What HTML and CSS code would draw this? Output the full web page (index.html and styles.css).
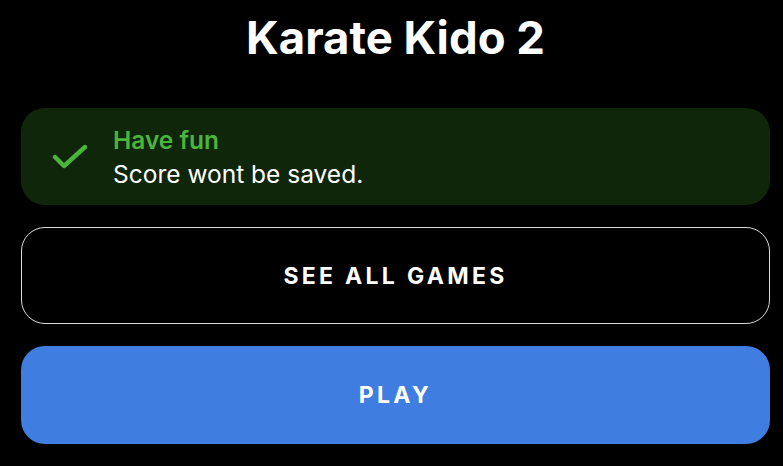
FILE: index.html
```html
<!DOCTYPE html>
<html lang="en">
<head>
<meta charset="utf-8">
<title>Karate Kido 2</title>
<link rel="stylesheet" href="styles.css">
</head>
<body>
<main class="page">
  <h1 class="title">Karate Kido 2</h1>
  <div class="notice">
    <svg class="check" width="36" height="28" viewBox="0 0 36 28" aria-hidden="true">
      <path d="M3 14 L12 23 L33 4" fill="none" stroke="#4cb33b" stroke-width="4.4" stroke-linecap="round" stroke-linejoin="round"/>
    </svg>
    <div class="notice-text">
      <div class="notice-title">Have fun</div>
      <div class="notice-body">Score wont be saved.</div>
    </div>
  </div>
  <button class="btn btn-outline">SEE ALL GAMES</button>
  <button class="btn btn-primary">PLAY</button>
</main>
</body>
</html>
```
FILE: styles.css
```css
html, body {
  margin: 0;
  padding: 0;
  background: #000;
  color: #fff;
  font-family: Inter, "Noto Sans", sans-serif;
}
.page {
  padding: 0 13px 0 21px;
  display: flex;
  flex-direction: column;
}
.title {
  margin: 0;
  height: 108px;
  box-sizing: border-box;
  padding-top: 10px;
  text-align: center;
  font-size: 45.5px;
  font-weight: 700;
  line-height: 56px;
}
.notice {
  height: 97px;
  box-sizing: border-box;
  background: #10260a;
  border-radius: 24px;
  display: flex;
  align-items: center;
  padding-left: 31px;
  gap: 25px;
}
.check {
  flex: none;
}
.notice-text {
  display: flex;
  flex-direction: column;
  font-size: 24.5px;
  line-height: 34px;
}
.notice-title {
  color: #4cb33b;
  font-weight: 600;
}
.notice-body {
  color: #fff;
}
.btn {
  height: 97px;
  margin-top: 22px;
  border-radius: 24px;
  font-family: Inter, "Noto Sans", sans-serif;
  font-size: 23px;
  font-weight: 700;
  letter-spacing: 3.3px;
  color: #fff;
  cursor: pointer;
}
.btn-outline {
  background: #000;
  border: 1px solid #d9d9d9;
}
.btn-primary {
  background: #3f7ee0;
  border: none;
  height: 98px;
}
```
